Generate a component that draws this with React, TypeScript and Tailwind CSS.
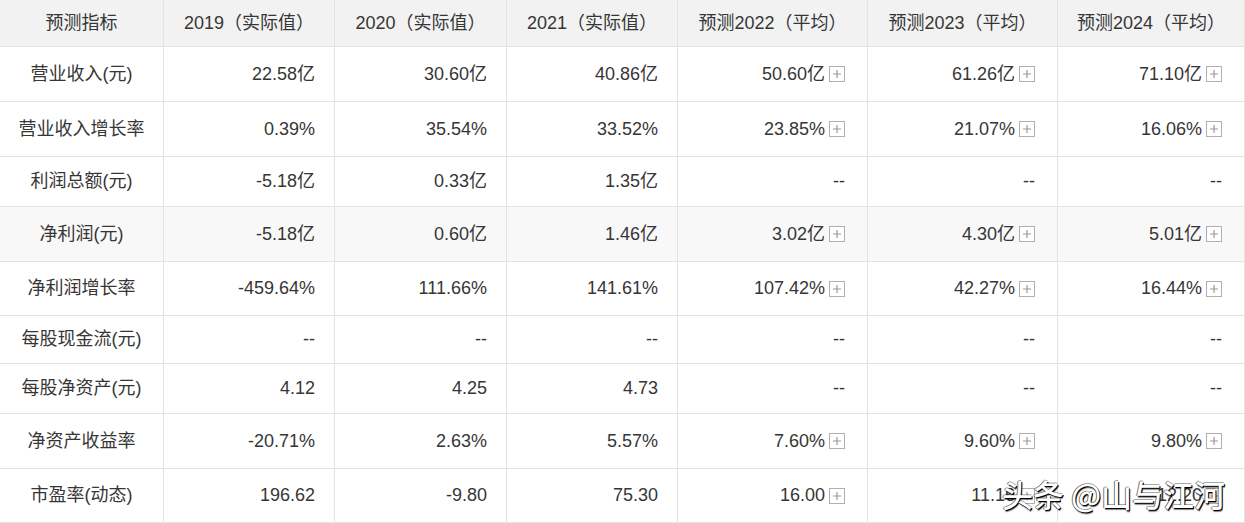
import React from "react";

type Cell = { v: string; plus?: boolean };
type Row = { label: string; h: string; bg?: string; cells: Cell[] };

const Plus = () => (
  <svg width="16" height="16" viewBox="0 0 16 16" className="ml-[4px] block h-[16px] w-[16px] min-w-[16px] shrink-0">
    <rect x="0.5" y="0.5" width="15" height="15" fill="#fff" stroke="#b0b0b0" />
    <path d="M4 8h8M8 4v8" stroke="#999" strokeWidth="1.2" />
  </svg>
);

const headers = [
  "预测指标",
  "2019（实际值）",
  "2020（实际值）",
  "2021（实际值）",
  "预测2022（平均）",
  "预测2023（平均）",
  "预测2024（平均）",
];

const n = (v: string): Cell => ({ v });
const p = (v: string): Cell => ({ v, plus: true });

const rows: Row[] = [
  { label: "营业收入(元)", h: "h-[55px]", cells: [n("22.58亿"), n("30.60亿"), n("40.86亿"), p("50.60亿"), p("61.26亿"), p("71.10亿")] },
  { label: "营业收入增长率", h: "h-[55px]", cells: [n("0.39%"), n("35.54%"), n("33.52%"), p("23.85%"), p("21.07%"), p("16.06%")] },
  { label: "利润总额(元)", h: "h-[50px]", cells: [n("-5.18亿"), n("0.33亿"), n("1.35亿"), n("--"), n("--"), n("--")] },
  { label: "净利润(元)", h: "h-[55px]", bg: "bg-[#f8f8f8]", cells: [n("-5.18亿"), n("0.60亿"), n("1.46亿"), p("3.02亿"), p("4.30亿"), p("5.01亿")] },
  { label: "净利润增长率", h: "h-[54px]", cells: [n("-459.64%"), n("111.66%"), n("141.61%"), p("107.42%"), p("42.27%"), p("16.44%")] },
  { label: "每股现金流(元)", h: "h-[48px]", cells: [n("--"), n("--"), n("--"), n("--"), n("--"), n("--")] },
  { label: "每股净资产(元)", h: "h-[50px]", cells: [n("4.12"), n("4.25"), n("4.73"), n("--"), n("--"), n("--")] },
  { label: "净资产收益率", h: "h-[55px]", cells: [n("-20.71%"), n("2.63%"), n("5.57%"), p("7.60%"), p("9.60%"), p("9.80%")] },
  { label: "市盈率(动态)", h: "h-[54px]", cells: [n("196.62"), n("-9.80"), n("75.30"), p("16.00"), p("11.16"), p("12.20")] },
];

const gridCols = "grid grid-cols-[164px_171px_172px_171px_190px_190px_1fr]";

export default function App() {
  return (
    <div
      className="relative w-[1245px] h-[523px] overflow-hidden bg-white text-[#363636] text-[18px]"
      style={{ fontFamily: '"Liberation Sans", Arial, "Noto Sans CJK SC", sans-serif' }}
    >
      <div className={`${gridCols} h-[47px] bg-[#f2f2f2]`}>
        {headers.map((h, i) => (
          <div
            key={i}
            className="flex items-center justify-center border-r border-b border-[#e3e3e3] whitespace-nowrap"
          >
            {h}
          </div>
        ))}
      </div>
      {rows.map((r, ri) => (
        <div key={ri} className={`${gridCols} ${r.h} ${r.bg ?? "bg-white"}`}>
          <div className="flex items-center justify-center border-r border-b border-[#e3e3e3] whitespace-nowrap">
            {r.label}
          </div>
          {r.cells.map((c, ci) => (
            <div
              key={ci}
              className={`flex items-center justify-end border-r border-b border-[#e3e3e3] whitespace-nowrap ${
                ci >= 3 ? "pr-[22px]" : "pr-[19px]"
              }`}
            >
              <span>{c.v}</span>
              {c.plus && <Plus />}
            </div>
          ))}
        </div>
      ))}
      <div
        className="absolute left-[1002px] top-[474px] text-[31px] font-medium leading-[40px] text-white whitespace-nowrap [text-shadow:1px_1px_0_#000,-1px_0_0_rgba(0,0,0,0.55),0_-1px_0_rgba(0,0,0,0.35),1px_2px_1px_rgba(0,0,0,0.5)]"
        style={{ fontFamily: '"Noto Sans CJK SC", sans-serif' }}
      >
        头条 @山与江河
      </div>
    </div>
  );
}
